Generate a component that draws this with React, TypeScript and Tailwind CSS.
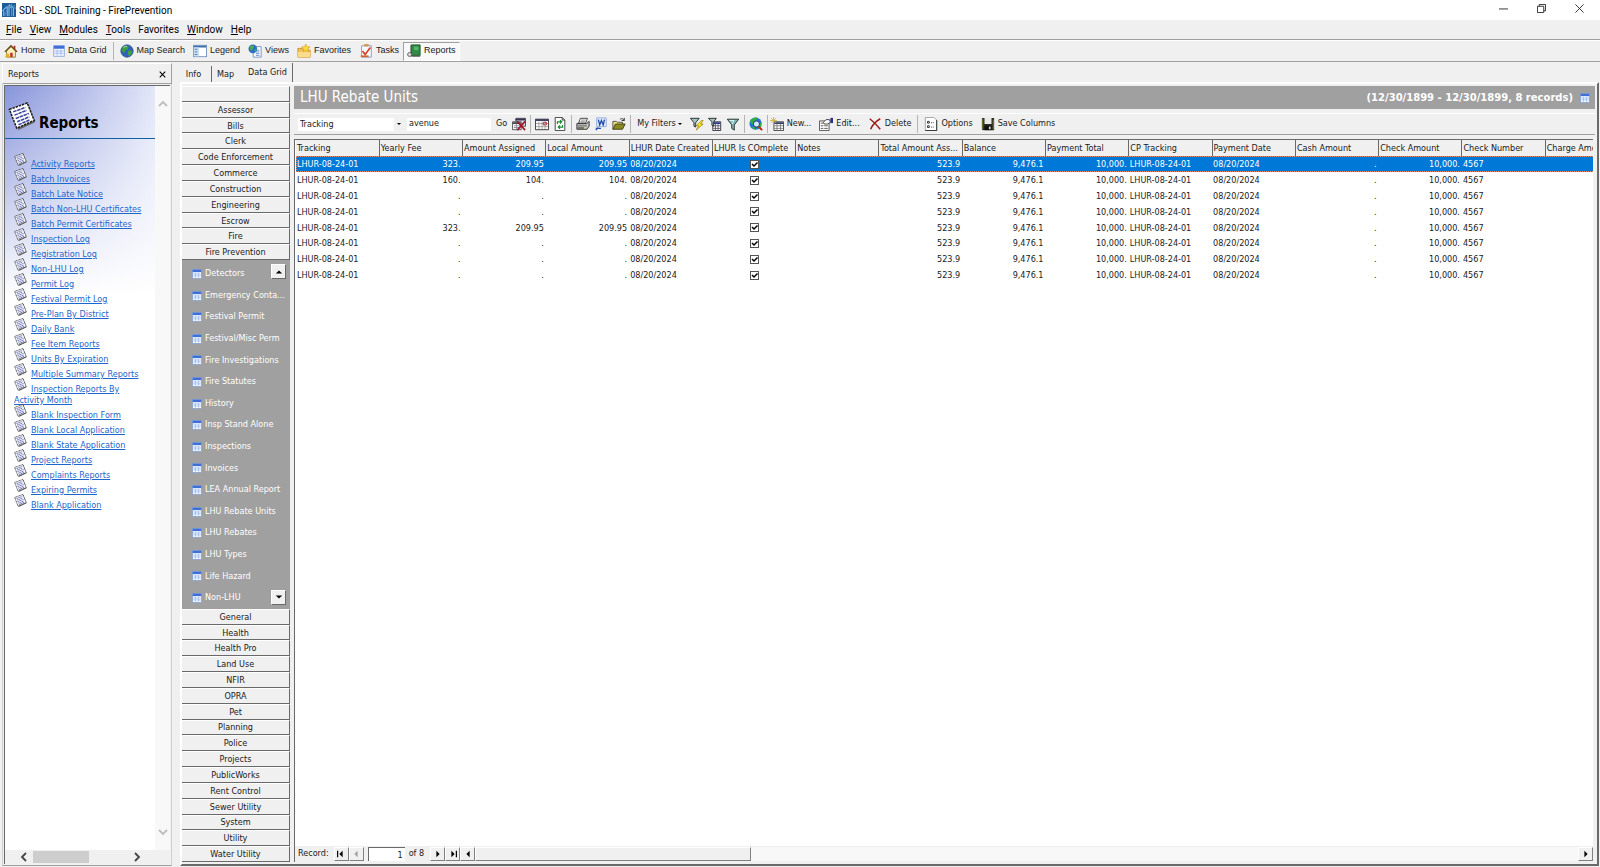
import { useState } from 'react';
import type { ReactNode } from 'react';

const REPORT_LINKS = [
  'Activity Reports',
  'Batch Invoices',
  'Batch Late Notice',
  'Batch Non-LHU Certificates',
  'Batch Permit Certificates',
  'Inspection Log',
  'Registration Log',
  'Non-LHU Log',
  'Permit Log',
  'Festival Permit Log',
  'Pre-Plan By District',
  'Daily Bank',
  'Fee Item Reports',
  'Units By Expiration',
  'Multiple Summary Reports',
  'Inspection Reports By Activity Month',
  'Blank Inspection Form',
  'Blank Local Application',
  'Blank State Application',
  'Project Reports',
  'Complaints Reports',
  'Expiring Permits',
  'Blank Application',
];

const MODULES_TOP = [
  '', 'Assessor', 'Bills', 'Clerk', 'Code Enforcement', 'Commerce',
  'Construction', 'Engineering', 'Escrow', 'Fire', 'Fire Prevention',
];

const MODULES_BOTTOM = [
  'General', 'Health', 'Health Pro', 'Land Use', 'NFIR', 'OPRA', 'Pet', 'Planning',
  'Police', 'Projects', 'PublicWorks', 'Rent Control', 'Sewer Utility', 'System',
  'Utility', 'Water Utility',
];

const FIRE_ITEMS = [
  'Detectors', 'Emergency Conta...', 'Festival Permit', 'Festival/Misc Perm',
  'Fire Investigations', 'Fire Statutes', 'History', 'Insp Stand Alone', 'Inspections',
  'Invoices', 'LEA Annual Report', 'LHU Rebate Units', 'LHU Rebates', 'LHU Types',
  'Life Hazard', 'Non-LHU',
];

const COLUMNS = [
  'Tracking', 'Yearly Fee', 'Amount Assigned', 'Local Amount', 'LHUR Date Created',
  'LHUR Is COmplete', 'Notes', 'Total Amount Ass...', 'Balance', 'Payment Total',
  'CP Tracking', 'Payment Date', 'Cash Amount', 'Check Amount', 'Check Number',
  'Charge Amount',
];

const AMOUNTS = [
  ['323.', '209.95', '209.95'],
  ['160.', '104.', '104.'],
  ['.', '.', '.'],
  ['.', '.', '.'],
  ['323.', '209.95', '209.95'],
  ['.', '.', '.'],
  ['.', '.', '.'],
  ['.', '.', '.'],
];

/* Icons */

function Svg({ children, className = 'size-[14px]' }: { children: ReactNode; className?: string }) {
  return (
    <svg viewBox="0 0 16 16" className={`shrink-0 ${className}`} fill="none" aria-hidden="true">
      {children}
    </svg>
  );
}

function AppIcon() {
  return (
    <Svg>
      <rect width="16" height="16" fill="#1d5c96" />
      <path d="M2 15V7l4-3v11M8 15V2l5 4v9" stroke="#9fd0f2" />
      <path d="M0 9c4-4 9-5 16-3M3 15c1-6 5-10 12-12M11 1v14" stroke="#5fa4d8" />
    </Svg>
  );
}

function HomeIcon() {
  return (
    <Svg>
      <path d="M11 2h2v4h-2z" fill="#a33" />
      <path d="M3 8v7h10V8L8 3z" fill="#fff3c4" stroke="#8a6a20" />
      <path d="M1 9l7-7 7 7" stroke="#6b4410" strokeWidth="1.500" />
      <path d="M7 10h3v5H7z" fill="#c0392b" />
      <path d="M1 15h5v-4H3z" fill="#e8b02a" />
    </Svg>
  );
}

function GridIcon({ className }: { className?: string }) {
  return (
    <Svg className={className}>
      <rect x="1" y="1" width="14" height="14" fill="#f4f8ff" stroke="#7c9bd6" />
      <rect x="1" y="1" width="14" height="4" fill="#3d6fd6" />
      <path d="M2 8h12M2 11h12M5.500 6v8M10.500 6v8" stroke="#8fb0ea" />
    </Svg>
  );
}

function GlobeIcon() {
  return (
    <Svg>
      <circle cx="8" cy="8" r="7" fill="#2e62b8" stroke="#24508f" />
      <path d="M3 4c2-2 5-2 7-1l-1 3-3 1-1 3-3-2zM9 8l4-1 1 3-3 4-2-2z" fill="#3fa23c" />
      <path d="M4 4c1-1 3-1.500 4-1" stroke="#bfe3b5" />
    </Svg>
  );
}

function LegendIcon() {
  return (
    <Svg>
      <rect x="0.500" y="1.500" width="15" height="13" fill="#fff" stroke="#6a8cc0" />
      <rect x="1" y="2" width="14" height="2" fill="#3d6fb0" />
      <rect x="1" y="4" width="6" height="10" fill="#cfe0f5" />
      <path d="M2 6h3M2 9h3M2 12h3" stroke="#3d6fb0" />
    </Svg>
  );
}

function ViewsIcon() {
  return (
    <Svg>
      <path d="M6 3h9v12H6z" fill="#fff" stroke="#6a8cc0" />
      <path d="M9 7h4M9 9h4M9 11h4M9 13h4" stroke="#5b86c8" />
      <circle cx="5.500" cy="5.500" r="5" fill="#2f6fc4" />
      <path d="M2 3c2-2 4-1 5 0L5 6l-2 2zM7 7l3-2-1 4z" fill="#49b04a" />
    </Svg>
  );
}

function FavoritesIcon() {
  return (
    <Svg>
      <path d="M1 5h5l1 2h8v8H1z" fill="#f3c25a" stroke="#c98f22" />
      <path d="M1 9h14v6H1z" fill="#fbdc8c" />
      <path d="M10 0l1.500 3 3.500.4-2.500 2.300.6 3.300L10 7.500 7 9l.6-3.300L5 3.400 8.600 3z" fill="#ffd83a" stroke="#d99d1c" strokeWidth=".7" />
    </Svg>
  );
}

function TasksIcon() {
  return (
    <Svg>
      <path d="M3 2h11v13H3z" fill="#fff" stroke="#7c8fc8" />
      <path d="M6 0h5v3H6z" fill="#d49a56" />
      <path d="M4 8l3 4 6-8" stroke="#d8422c" strokeWidth="2" />
      <path d="M2 14h9" stroke="#d8622c" strokeWidth="2" />
    </Svg>
  );
}

function BookIcon() {
  return (
    <Svg>
      <path d="M5 1h10v12H5z" fill="#2f8a45" stroke="#1c5229" />
      <path d="M8 3h5v4H8z" fill="#58b56b" />
      <path d="M4 1v10" stroke="#888" />
      <circle cx="3" cy="12" r="2.300" fill="#ddd" stroke="#555" />
      <path d="M5 14h10" stroke="#444" />
    </Svg>
  );
}

function PaperIcon({ className }: { className?: string }) {
  return (
    <Svg className={className}>
      <path d="M1.500 5L11.500 1l4 10.500L6 16z" fill="#666" />
      <path d="M.8 4.200L11 .6l4 9.900L5 15z" fill="#fff" stroke="#222" strokeWidth=".9" strokeDasharray="1.400 .5" />
      <path d="M3 5.600l7-2.500M3.700 7.500l7-2.700M4.400 9.400l7.500-2.900M5.200 11.300l7-2.800M6 13l6.500-2.800" stroke="#3c46a0" strokeWidth=".9" strokeDasharray="2 .4" />
    </Svg>
  );
}

function ClearIcon() {
  return (
    <Svg>
      <path d="M4.500 1.500h11v9h-11z" fill="#dde" stroke="#333" />
      <path d="M4 3h11" stroke="#335" strokeWidth="2" />
      <path d="M.5 5.500h10v9H.5z" fill="#fff" stroke="#444" />
      <path d="M1 7h9" stroke="#445" strokeWidth="2" />
      <path d="M2 10h7M2 12h7M5 8v6" stroke="#889" />
      <path d="M6 5l9 10M15 5L6 15" stroke="#9c1522" strokeWidth="1.800" />
    </Svg>
  );
}

function CalendarIcon() {
  return (
    <Svg>
      <path d="M.5 2.500h15v12H.5z" fill="#fff" stroke="#222" />
      <path d="M1 3.500h14" stroke="#333a5a" strokeWidth="2" />
      <path d="M1 7.500h14M1 11h14M4.500 5v9M8 5v9M11.500 5v9" stroke="#999" />
      <path d="M9.500 6h3.500v3H9.500z" stroke="#b3202a" />
    </Svg>
  );
}

function RefreshIcon() {
  return (
    <Svg>
      <path d="M2.500.5h8l3 3v12h-11z" fill="#fff" stroke="#333" />
      <path d="M10.500.5v3h3" stroke="#333" />
      <path d="M5 8V5.500h4M8 3.500l2 2-2 2M11 9v2.500H7M8 9.500l-2 2 2 2" stroke="#158a2a" strokeWidth="1.300" />
    </Svg>
  );
}

function PrinterIcon() {
  return (
    <Svg>
      <path d="M5 1.500h8L11 7H3z" fill="#fff" stroke="#333" />
      <path d="M6 3.500h5M5 5.500h5" stroke="#777" />
      <path d="M1 7.500h11l3-2.500v5.500L12.500 14H1z" fill="#c4c4c4" stroke="#222" />
      <path d="M1.500 9h11v2h-11z" fill="#888" />
      <path d="M2 12.500h7" stroke="#222" />
      <path d="M9 12.500h2" stroke="#e8d22a" />
    </Svg>
  );
}

function WordIcon() {
  return (
    <Svg>
      <path d="M3 1h11v10H3z" fill="#dfe9fb" stroke="#8fa9dc" />
      <path d="M5 3l1.500 6L8.500 4l2 5L12 3" stroke="#1f48a8" strokeWidth="1.500" />
      <path d="M2 13h6M2 15l3-3" stroke="#2553b8" strokeWidth="1.500" />
    </Svg>
  );
}

function FolderIcon() {
  return (
    <Svg>
      <path d="M1 14V5h4l1 1h6v3" fill="#f2e27c" stroke="#444" />
      <path d="M1 14l3-6h11l-3 6z" fill="#8c8a22" stroke="#3b3a10" />
      <path d="M9 3c2-2 4-1 5 1M14 1v3h-3" stroke="#222" />
    </Svg>
  );
}

function FilterFlashIcon() {
  return (
    <Svg>
      <path d="M.5 1.500h10l-4 5v5l-2-1v-4z" fill="#9fc4c4" stroke="#222" />
      <path d="M13 4L7 10h3l-3 5 8-7h-3l3-4z" fill="#ffe620" stroke="#806f00" strokeWidth=".7" />
    </Svg>
  );
}

function FilterGridIcon() {
  return (
    <Svg>
      <path d="M5.500 5.500h9v10h-9z" fill="#fff" stroke="#223" />
      <path d="M6 7h8" stroke="#2a3a8a" strokeWidth="2" />
      <path d="M6 10h8M6 13h8M8.500 8v7M11.500 8v7" stroke="#556" />
      <path d="M.5 1.500h9l-3 4v5l-2-1v-4z" fill="#9fc4c4" stroke="#222" />
    </Svg>
  );
}

function FilterIcon() {
  return (
    <Svg>
      <path d="M1.500 2.500h13L9.500 9v6l-3-2V9z" fill="#7fb6b6" stroke="#222" />
      <path d="M4 4h5l-2 4" stroke="#e6ffff" />
    </Svg>
  );
}

function GlobeSearchIcon() {
  return (
    <Svg>
      <circle cx="7.500" cy="7.500" r="7" fill="#1e74d8" />
      <path d="M1 5c2-4 6-5 9-4L8 4 5 5 4 9zM9 9l5-3v5l-3 3zM3 12l3-1 2 3H5z" fill="#2fae3e" />
      <circle cx="8.500" cy="8" r="3.500" fill="#cdeeff" stroke="#1b2e6e" />
      <path d="M11 11l4 4" stroke="#c62020" strokeWidth="2.400" />
    </Svg>
  );
}

function NewIcon() {
  return (
    <Svg>
      <path d="M4.500 5.500h11v10h-11z" fill="#fff" stroke="#333" />
      <path d="M5 7h10" stroke="#33406a" strokeWidth="2" />
      <path d="M5 10h10M5 13h10M8 8v7M12 8v7" stroke="#777" />
      <path d="M4 0v8M0 4h8M1 1l6 6M7 1L1 7" stroke="#c9b13a" strokeWidth=".9" />
    </Svg>
  );
}

function EditIcon() {
  return (
    <Svg>
      <path d="M.5 4.500h11v11H.5z" fill="#fff" stroke="#444" />
      <path d="M2 7h3M2 10h3M2 13h3M6 10h4M6 13h4" stroke="#444" />
      <path d="M5 6l3-3h4l1 3-3 2H6z" fill="#fff" stroke="#333" />
      <path d="M13 1h3v6h-3z" fill="#26328a" />
    </Svg>
  );
}

function DeleteIcon() {
  return (
    <Svg>
      <path d="M2 2c4 3 8 7 12 12M14 2C9 5 5 9 3 14" stroke="#9c1c1c" strokeWidth="1.700" />
    </Svg>
  );
}

function OptionsIcon() {
  return (
    <Svg>
      <path d="M1.500.5h10l3 3v12h-13z" fill="#fff" stroke="#999" />
      <path d="M14.500 3.500v12h-13" stroke="#222" />
      <path d="M4 5h2v2H4zM4 10h2v2H4z" stroke="#222" />
      <path d="M8 6.500h4M8 11.500h4" stroke="#222" strokeDasharray="1 1" />
    </Svg>
  );
}

function SaveIcon() {
  return (
    <Svg>
      <path d="M1 1h14v14H2l-1-1z" fill="#2b2b22" />
      <path d="M4 1h8v7H4z" fill="#e9e9e9" />
      <path d="M4 10h8v5H4z" fill="#111" />
      <path d="M9 11h2v3H9z" fill="#ddd" />
      <path d="M2 2v12M14 3v11" stroke="#8a8a2a" />
    </Svg>
  );
}

/* Small arrow glyphs used by the scroll bars and the record navigator */
function Arrow({ dir, bar, muted }: { dir: 'up' | 'down' | 'left' | 'right'; bar?: boolean; muted?: boolean }) {
  const paths = {
    up: 'M1 7h8L5 3z',
    down: 'M1 3h8L5 7z',
    left: 'M7 1v8L3 5z',
    right: 'M3 1v8l4-4z',
  };
  return (
    <svg viewBox="0 0 10 10" className="size-[8px]" fill={muted ? '#a0a0a0' : '#000'} aria-hidden="true">
      <path d={paths[dir]} />
      {bar && <path d={dir === 'left' ? 'M0 1h1.500v8H0z' : 'M8.500 1H10v8H8.500z'} />}
    </svg>
  );
}

function Chevron({ dir, className }: { dir: 'up' | 'down' | 'left' | 'right'; className: string }) {
  const paths = { up: 'M1 7l4-4 4 4', down: 'M1 3l4 4 4-4', left: 'M7 1L3 5l4 4', right: 'M3 1l4 4-4 4' };
  return (
    <svg viewBox="0 0 10 10" className={`size-[10px] ${className}`} fill="none" stroke="currentColor" strokeWidth="1.800" aria-hidden="true">
      <path d={paths[dir]} />
    </svg>
  );
}

/* Chrome */

function TitleBar() {
  return (
    <header className="flex h-[20px] shrink-0 items-center bg-white pl-[2px] font-['Roboto',sans-serif] text-[10px] text-black">
      <AppIcon />
      <h1 className="ml-[3px] flex-1">SDL - SDL Training - FirePrevention</h1>
      <div className="flex pr-[2px] pb-[4px]">
        <button aria-label="Minimize" className="flex w-[38px] justify-center">
          <svg viewBox="0 0 10 10" className="size-[9px]" stroke="#222"><path d="M0 5.500h10" /></svg>
        </button>
        <button aria-label="Restore" className="flex w-[38px] justify-center">
          <svg viewBox="0 0 10 10" className="size-[9px]" fill="none" stroke="#222"><path d="M.5 2.500h7v7h-7zM2.500 2.500v-2h7v7h-2" /></svg>
        </button>
        <button aria-label="Close" className="flex w-[38px] justify-center">
          <svg viewBox="0 0 10 10" className="size-[9px]" stroke="#222"><path d="M.5.5l9 9M9.500.5l-9 9" /></svg>
        </button>
      </div>
    </header>
  );
}

function MenuBar() {
  const menus = ['File', 'View', 'Modules', 'Tools', 'Favorites', 'Window', 'Help'];
  return (
    <nav className="flex h-[20px] shrink-0 items-center gap-[8px] border-b border-[#a0a0a0] pl-[6px] font-['Roboto',sans-serif] text-[10px] text-black">
      {menus.map(menu => (
        <button key={menu}>
          {menu === 'Favorites' ? menu : <><u>{menu[0]}</u>{menu.slice(1)}</>}
        </button>
      ))}
    </nav>
  );
}

function Separator() {
  return <span className="mx-[2px] h-[18px] w-px shrink-0 bg-[#b4b4b4]" />;
}

function ToolButton({ icon, label, pressed }: { icon: ReactNode; label: string; pressed?: boolean }) {
  return (
    <button
      className={`flex h-[19px] items-center gap-[3px] border px-[3px] ${
        pressed ? 'border-t-[#a0a0a0] border-r-white border-b-white border-l-[#a0a0a0] bg-[#f8f8f8]' : 'border-transparent'
      }`}
    >
      {icon}
      {label}
    </button>
  );
}

function MainToolbar() {
  return (
    <div className="flex h-[22px] shrink-0 items-center border-t border-b border-t-white border-b-[#a0a0a0] font-['Liberation_Sans',sans-serif] text-[#1a1a1a]">
      <ToolButton icon={<HomeIcon />} label="Home" />
      <ToolButton icon={<GridIcon className="size-[12px]" />} label="Data Grid" />
      <Separator />
      <ToolButton icon={<GlobeIcon />} label="Map Search" />
      <ToolButton icon={<LegendIcon />} label="Legend" />
      <ToolButton icon={<ViewsIcon />} label="Views" />
      <ToolButton icon={<FavoritesIcon />} label="Favorites" />
      <ToolButton icon={<TasksIcon />} label="Tasks" />
      <ToolButton icon={<BookIcon />} label="Reports" pressed />
    </div>
  );
}

function ReportsPanel() {
  return (
    <aside className="mr-[8px] flex w-[172px] shrink-0 flex-col pt-px pl-[2px]">
      <div className="flex h-[21px] items-center justify-between border border-t-white border-r-[#a0a0a0] border-b-[#a0a0a0] border-l-white px-[5px] pt-[2px]">
        <h2>Reports</h2>
        <button aria-label="Close panel">
          <svg viewBox="0 0 10 10" className="size-[7px]" stroke="#000" strokeWidth="1.500"><path d="M1 1l8 8M9 1L1 9" /></svg>
        </button>
      </div>
      <div className="mb-px flex min-h-0 flex-1 flex-col border-r border-b border-l border-r-[#d0d0d0] border-b-[#a0a0a0] border-l-[#d0d0d0] p-px">
        <div className="flex min-h-0 flex-1 border-t border-l border-[#696969]">
          <div className="min-w-0 flex-1 bg-white bg-[linear-gradient(180deg,transparent_0,white_210px),linear-gradient(90deg,#8794da,#e2e6f8)] bg-[length:100%_210px] bg-no-repeat">
            <div className="flex h-[53px] items-end gap-[3px] border-b border-[#1060a0] pb-[6px] pl-[3px]">
              <PaperIcon className="mb-[2px] size-[28px]" />
              <h2 className="text-[15px] leading-[18px] font-bold text-black">Reports</h2>
            </div>
            <ul className="pt-[16px] pr-[10px] pl-[9px]">
              {REPORT_LINKS.map(link => (
                <li key={link} className="pt-[4px] leading-[11px]">
                  <PaperIcon className="-mt-[10px] mr-[4px] inline-block size-[13px] align-[1px]" />
                  <a href="#" className="text-[#1c66cc] underline">{link}</a>
                </li>
              ))}
            </ul>
          </div>
          <div className="flex w-[15px] flex-col items-center justify-between bg-[#f8f8f8] py-[13px] text-[#bdbdbd]">
            <button aria-label="Scroll up"><Chevron dir="up" className="block" /></button>
            <button aria-label="Scroll down"><Chevron dir="down" className="block" /></button>
          </div>
        </div>
        <div className="flex h-[14px] items-center border-l border-[#696969] pr-[28px] pl-[14px] text-[#444]">
          <button aria-label="Scroll left"><Chevron dir="left" className="block" /></button>
          <div className="ml-[4px] h-[12px] w-[56px] bg-[#cdcdcd]" />
          <button aria-label="Scroll right" className="ml-auto"><Chevron dir="right" className="block" /></button>
        </div>
      </div>
    </aside>
  );
}

function ModuleButton({ label }: { label: string }) {
  return (
    <button
      aria-label={label || 'Blank module'}
      className="min-h-0 w-full flex-1 border-t border-r border-b border-t-white border-r-[#696969] border-b-[#696969] text-center leading-[12px]"
    >
      {label}
    </button>
  );
}

function ModuleList() {
  const box =
    'absolute right-[4px] flex h-[15px] w-[15px] items-center justify-center border border-t-white border-r-[#696969] border-b-[#696969] border-l-white bg-[#f0f0f0]';
  return (
    <nav className="flex w-[108px] shrink-0 flex-col">
      {MODULES_TOP.map(label => <ModuleButton key={label} label={label} />)}
      <div className="relative flex min-h-0 flex-[25] flex-col bg-[#a0a0a0] pt-[3px] text-white">
        {FIRE_ITEMS.map(item => (
          <a key={item} href="#" className="flex min-h-0 flex-1 items-center gap-[3px] pl-[10px] whitespace-nowrap">
            <GridIcon className="size-[10px]" />
            {item}
          </a>
        ))}
        <button aria-label="Scroll items up" className={`${box} top-[4px]`}><Arrow dir="up" /></button>
        <button aria-label="Scroll items down" className={`${box} bottom-[4px]`}><Arrow dir="down" /></button>
      </div>
      {MODULES_BOTTOM.map(label => <ModuleButton key={label} label={label} />)}
    </nav>
  );
}

function GridToolbar() {
  const [field, setField] = useState('Tracking');
  const [query, setQuery] = useState('avenue');
  const iconButton = 'flex px-[2px]';
  const textButton = 'flex items-center gap-[3px]';
  return (
    <div className="mt-[4px] flex h-[22px] shrink-0 items-center border-t border-b border-t-white border-b-[#a0a0a0] pl-[4px] text-[#1a1a1a]">
      <div className="relative mr-[4px]">
        <select
          aria-label="Search field"
          value={field}
          onChange={e => setField(e.target.value)}
          className="block h-[13px] w-[105px] appearance-none bg-white pl-[2px] leading-[13px]"
        >
          {COLUMNS.map(c => <option key={c}>{c}</option>)}
        </select>
        <span className="pointer-events-none absolute top-0 right-0 flex h-[13px] w-[9px] items-center justify-center bg-[#f0f0f0]">
          <svg viewBox="0 0 4 2" className="h-[2px] w-[4px]"><path d="M0 0h4L2 2z" /></svg>
        </span>
      </div>
      <input
        aria-label="Search text"
        value={query}
        onChange={e => setQuery(e.target.value)}
        className="mr-[5px] h-[13px] w-[84px] bg-white pl-[2px] outline-none"
      />
      <button className="mr-[3px]">Go</button>
      <button aria-label="Clear search" className={iconButton}><ClearIcon /></button>
      <Separator />
      <button aria-label="Calendar" className={iconButton}><CalendarIcon /></button>
      <button aria-label="Refresh" className={iconButton}><RefreshIcon /></button>
      <Separator />
      <button aria-label="Print" className={iconButton}><PrinterIcon /></button>
      <button aria-label="Export to Word" className={iconButton}><WordIcon /></button>
      <button aria-label="Open" className={iconButton}><FolderIcon /></button>
      <Separator />
      <button className="flex items-center gap-[2px] pr-[6px] pl-[4px]">
        My Filters
        <svg viewBox="0 0 4 2" className="h-[2px] w-[4px]"><path d="M0 0h4L2 2z" /></svg>
      </button>
      <button aria-label="Quick filter" className={iconButton}><FilterFlashIcon /></button>
      <button aria-label="Filter by grid" className={iconButton}><FilterGridIcon /></button>
      <button aria-label="Filter" className={iconButton}><FilterIcon /></button>
      <Separator />
      <button aria-label="Find on map" className={iconButton}><GlobeSearchIcon /></button>
      <Separator />
      <button className={`${textButton} pr-[8px]`}><NewIcon />New...</button>
      <button className={`${textButton} pr-[8px]`}><EditIcon />Edit...</button>
      <button className={`${textButton} pr-[4px]`}><DeleteIcon />Delete</button>
      <Separator />
      <button className={`${textButton} pr-[8px] pl-[4px]`}><OptionsIcon />Options</button>
      <button className={textButton}><SaveIcon />Save Columns</button>
    </div>
  );
}

function CompleteBox({ row }: { row: number }) {
  return (
    <span className="relative mx-auto block size-[9px]">
      <input
        type="checkbox"
        defaultChecked
        aria-label={`LHUR is complete, row ${row}`}
        className="peer block size-[9px] appearance-none border border-[#555] bg-white"
      />
      <svg viewBox="0 0 9 9" className="pointer-events-none absolute inset-0 hidden size-[9px] peer-checked:block" fill="none" stroke="#000" strokeWidth="1.500">
        <path d="M2 4l2 2 3.500-3.500" />
      </svg>
    </span>
  );
}

function RecordTable() {
  const [selected, setSelected] = useState(0);
  const right = 'pr-[2px] text-right';
  const left = 'pl-px';
  return (
    <table className="h-[143px] w-[1333px] table-fixed border-collapse leading-[12px] whitespace-nowrap text-[#1a1a1a]">
      <thead>
        <tr className="h-[16px] bg-[#f0f0f0]">
          {COLUMNS.map(c => (
            <th key={c} className="border-r border-b border-[#696969] pl-px text-left font-normal">{c}</th>
          ))}
        </tr>
      </thead>
      <tbody>
        {AMOUNTS.map(([fee, assigned, local], i) => (
          <tr
            key={i}
            onClick={() => setSelected(i)}
            className={i === selected ? 'bg-[#0078d7] text-white outline-1 -outline-offset-1 outline-[#e08a70] outline-dotted' : ''}
          >
            <td className={left}>LHUR-08-24-01</td>
            <td className={right}>{fee}</td>
            <td className={right}>{assigned}</td>
            <td className={right}>{local}</td>
            <td className={left}>08/20/2024</td>
            <td><CompleteBox row={i + 1} /></td>
            <td />
            <td className={right}>523.9</td>
            <td className={right}>9,476.1</td>
            <td className={right}>10,000.</td>
            <td className={left}>LHUR-08-24-01</td>
            <td className={left}>08/20/2024</td>
            <td className={right}>.</td>
            <td className={right}>10,000.</td>
            <td className={left}>4567</td>
            <td />
          </tr>
        ))}
      </tbody>
    </table>
  );
}

function RecordNavigator() {
  const btn =
    'flex h-[14px] w-[15px] shrink-0 items-center justify-center border border-t-white border-r-[#808080] border-b-[#808080] border-l-white bg-[#f0f0f0]';
  return (
    <div className="flex h-[16px] shrink-0 items-center bg-[#f0f0f0] pl-[3px]">
      <label htmlFor="record" className="mr-[5px]">Record:</label>
      <button aria-label="First record" className={btn}><Arrow dir="left" bar /></button>
      <button aria-label="Previous record" className={btn}><Arrow dir="left" muted /></button>
      <input
        id="record"
        defaultValue="1"
        className="mx-[4px] h-[14px] w-[37px] border-t border-l border-[#696969] bg-white pr-[2px] text-right outline-none"
      />
      <span className="mr-[6px]">of 8</span>
      <button aria-label="Next record" className={btn}><Arrow dir="right" /></button>
      <button aria-label="Last record" className={btn}><Arrow dir="right" bar /></button>
      <button aria-label="Scroll grid left" className={btn}><Arrow dir="left" /></button>
      <div className="h-[14px] flex-1 bg-[#f8f8f8]">
        <div className="h-[14px] w-1/4 border border-t-white border-r-[#808080] border-b-[#808080] border-l-white bg-[#f0f0f0]" />
      </div>
      <button aria-label="Scroll grid right" className={btn}><Arrow dir="right" /></button>
    </div>
  );
}

function Tabs() {
  return (
    <div role="tablist" className="flex h-[20px] shrink-0 items-end">
      <button role="tab" className="h-[16px] w-[32px] border-r border-[#696969] pt-[2px] pr-[4px]">Info</button>
      <button role="tab" className="h-[16px] w-[31px] pt-[2px] pr-[4px]">Map</button>
      <button role="tab" aria-selected="true" className="h-[19px] w-[50px] border-r border-r-[#696969]">Data Grid</button>
    </div>
  );
}

export default function App() {
  return (
    <div className="flex h-screen flex-col overflow-hidden bg-[#f0f0f0] font-['DejaVu_Sans_Condensed','DejaVu_Sans',sans-serif] text-[9px] text-[#1a1a1a]">
      <TitleBar />
      <MenuBar />
      <MainToolbar />
      <div className="flex min-h-0 flex-1">
        <ReportsPanel />
        <div className="flex min-w-0 flex-1 flex-col pr-px pb-px">
          <Tabs />
          <div className="flex min-h-0 flex-1 border-2 border-t-white border-r-[#696969] border-b-[#696969] border-l-white pt-[2px] pr-[2px] pb-[2px]">
            <ModuleList />
            <main className="ml-[4px] flex min-w-0 flex-1 flex-col">
              <div className="flex h-[23px] shrink-0 items-center bg-[#a0a0a0] pr-[5px] pl-[6px] text-white">
                <h2 className="flex-1 text-[15px]">LHU Rebate Units</h2>
                <span className="mr-[7px] font-['DejaVu_Sans',sans-serif] text-[10px] font-bold">(12/30/1899 - 12/30/1899, 8 records)</span>
                <GridIcon className="size-[10px]" />
              </div>
              <GridToolbar />
              <div className="mt-[4px] mr-[2px] flex min-h-0 flex-1 flex-col border-t border-l border-[#696969]">
                <div className="min-h-0 flex-1 overflow-hidden bg-white pl-px">
                  <RecordTable />
                </div>
                <RecordNavigator />
              </div>
            </main>
          </div>
        </div>
      </div>
    </div>
  );
}
